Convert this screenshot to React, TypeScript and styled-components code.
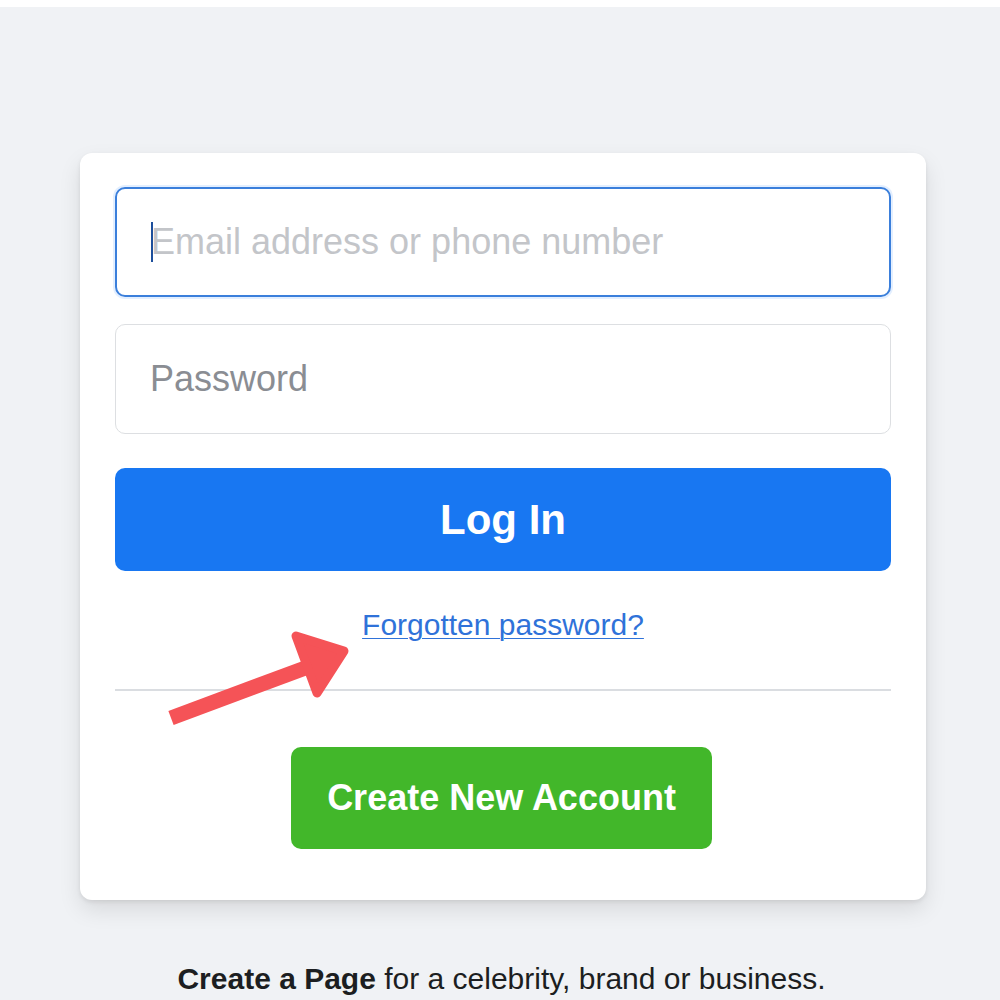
import React from "react";
import styled, { createGlobalStyle } from "styled-components";

const GlobalStyle = createGlobalStyle`
  html, body {
    margin: 0;
    padding: 0;
    background: #f0f2f5;
    font-family: "Liberation Sans", Arial, sans-serif;
  }
`;

const Page = styled.main`
  min-height: 1000px;
  background: #f0f2f5;
  overflow: hidden;
`;

const TopStrip = styled.div`
  height: 7px;
  background: #ffffff;
`;

const Card = styled.section`
  position: relative;
  width: 846px;
  margin: 146px 0 0 80px;
  box-sizing: border-box;
  padding: 34px 35px 51px;
  background: #ffffff;
  border-radius: 12px;
  box-shadow: 0 2px 4px rgba(0, 0, 0, 0.08), 0 10px 22px rgba(0, 0, 0, 0.1);
  display: flex;
  flex-direction: column;
  align-items: stretch;
`;

const Field = styled.div<{ $focused?: boolean }>`
  position: relative;
  height: 110px;
  box-sizing: border-box;
  border-radius: 10px;
  border: ${(p) => (p.$focused ? "2px solid #3b7fdb" : "1px solid #dddfe2")};
  box-shadow: ${(p) => (p.$focused ? "0 0 0 2px #e3efff" : "none")};
  display: flex;
  align-items: center;
  margin-top: ${(p) => (p.$focused ? "0" : "27px")};
`;

const Input = styled.input<{ $light?: boolean }>`
  width: 100%;
  border: none;
  outline: none;
  background: transparent;
  font-family: "Liberation Sans", Arial, sans-serif;
  font-size: 36px;
  padding: 0 34px;
  color: #1c1e21;
  &::placeholder {
    color: ${(p) => (p.$light ? "#c3c5c9" : "#8a8d93")};
  }
`;

const Caret = styled.span`
  position: absolute;
  left: 34px;
  top: 33px;
  width: 2px;
  height: 40px;
  background: #1d4f9c;
`;

const LoginButton = styled.button`
  margin-top: 34px;
  height: 103px;
  border: none;
  border-radius: 10px;
  background: #1877f2;
  color: #ffffff;
  font-family: "Liberation Sans", Arial, sans-serif;
  font-weight: 700;
  font-size: 42px;
  cursor: pointer;
`;

const ForgotLink = styled.a`
  align-self: center;
  margin-top: 36px;
  font-size: 30px;
  line-height: 36px;
  color: #2f72d9;
  text-decoration: underline;
  text-underline-offset: 3px;
  text-decoration-thickness: 1px;
`;

const Divider = styled.hr`
  margin: 46px 0 0;
  border: none;
  border-top: 2px solid #dadde1;
`;

const CreateButton = styled.button`
  align-self: center;
  margin: 56px 3px 0 0;
  width: 421px;
  height: 102px;
  border: none;
  border-radius: 10px;
  background: #42b72a;
  color: #ffffff;
  font-family: "Liberation Sans", Arial, sans-serif;
  font-weight: 700;
  font-size: 36px;
  cursor: pointer;
`;

const Arrow = styled.svg`
  position: absolute;
  left: 0;
  top: 0;
  width: 846px;
  height: 746px;
  pointer-events: none;
  overflow: visible;
`;

const Footer = styled.p`
  margin: 62px 0 0;
  padding-left: 3px;
  text-align: center;
  font-size: 30px;
  line-height: 34px;
  color: #1c1e21;
  b {
    font-weight: 700;
  }
`;

export default function App() {
  return (
    <>
      <GlobalStyle />
      <Page>
        <TopStrip />
        <Card>
          <Field $focused>
            <Input $light placeholder="Email address or phone number" />
            <Caret />
          </Field>
          <Field>
            <Input type="password" placeholder="Password" />
          </Field>
          <LoginButton>Log In</LoginButton>
          <ForgotLink href="#">Forgotten password?</ForgotLink>
          <Divider />
          <CreateButton>Create New Account</CreateButton>
          <Arrow viewBox="0 0 846 746">
            <line
              x1="91"
              y1="565"
              x2="228"
              y2="514"
              stroke="#f55357"
              strokeWidth="15"
            />
            <polygon
              points="216,483 264,498 237,540"
              fill="#f55357"
              stroke="#f55357"
              strokeWidth="9"
              strokeLinejoin="round"
            />
          </Arrow>
        </Card>
        <Footer>
          <b>Create a Page</b> for a celebrity, brand or business.
        </Footer>
      </Page>
    </>
  );
}
